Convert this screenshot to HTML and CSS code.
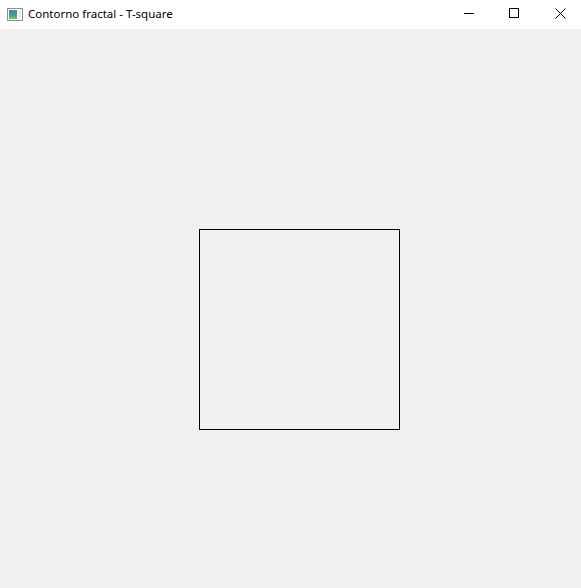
FILE: index.html
```html
<!DOCTYPE html>
<html>
<head>
<meta charset="utf-8">
<link rel="stylesheet" href="styles.css">
</head>
<body>
<div class="window">
  <div class="titlebar">
    <svg class="app-icon" width="16" height="13" viewBox="0 0 16 13">
      <rect x="0.5" y="0.5" width="15" height="12" fill="#fff" stroke="#8a8f96"/>
      <defs>
        <linearGradient id="g" x1="0" y1="0" x2="0" y2="1">
          <stop offset="0" stop-color="#5a7fa8"/>
          <stop offset="0.5" stop-color="#3d9c8a"/>
          <stop offset="1" stop-color="#7cc45a"/>
        </linearGradient>
      </defs>
      <rect x="2" y="2" width="8" height="9" fill="url(#g)"/>
      <rect x="11" y="2" width="3" height="9" fill="#e8eef2"/>
    </svg>
    <span class="title">Contorno fractal - T-square</span>
    <div class="controls">
      <svg class="ctl" width="10" height="11" viewBox="0 0 10 11"><path d="M0 5.5H10" stroke="#000" stroke-width="1"/></svg>
      <svg class="ctl" width="10" height="11" viewBox="0 0 10 11"><rect x="0.5" y="0.5" width="9" height="9" fill="none" stroke="#000"/></svg>
      <svg class="ctl" width="11" height="11" viewBox="0 0 11 11"><path d="M0.5 0.5L10.5 10.5M10.5 0.5L0.5 10.5" stroke="#000" stroke-width="1"/></svg>
    </div>
  </div>
  <div class="canvas">
    <div class="square"></div>
  </div>
</div>
</body>
</html>
```

FILE: styles.css
```css
html, body {
  margin: 0;
  padding: 0;
  background: #f0f0f0;
}
.window {
  width: 581px;
  height: 588px;
  display: flex;
  flex-direction: column;
  font-family: "Noto Sans", "Open Sans", sans-serif;
}
.titlebar {
  height: 29px;
  background: #fff;
  display: flex;
  align-items: center;
  flex-shrink: 0;
}
.app-icon {
  margin-left: 7px;
  display: block;
}
.title {
  margin-left: 5px;
  font-size: 11.5px;
  color: #000;
  line-height: 16px;
  margin-top: -1px;
}
.controls {
  margin-left: auto;
  display: flex;
  align-items: flex-start;
  gap: 35px;
  padding-right: 15px;
  height: 29px;
  padding-top: 8px;
  box-sizing: border-box;
}
.ctl { display: block; }
.ctl:nth-child(2) { margin-right: 1px; }
.canvas {
  flex: 1;
  padding: 200px 0 0 199px;
  background: #f0f0f0;
}
.square {
  width: 201px;
  height: 201px;
  box-sizing: border-box;
  border: 1px solid #000;
}
```
